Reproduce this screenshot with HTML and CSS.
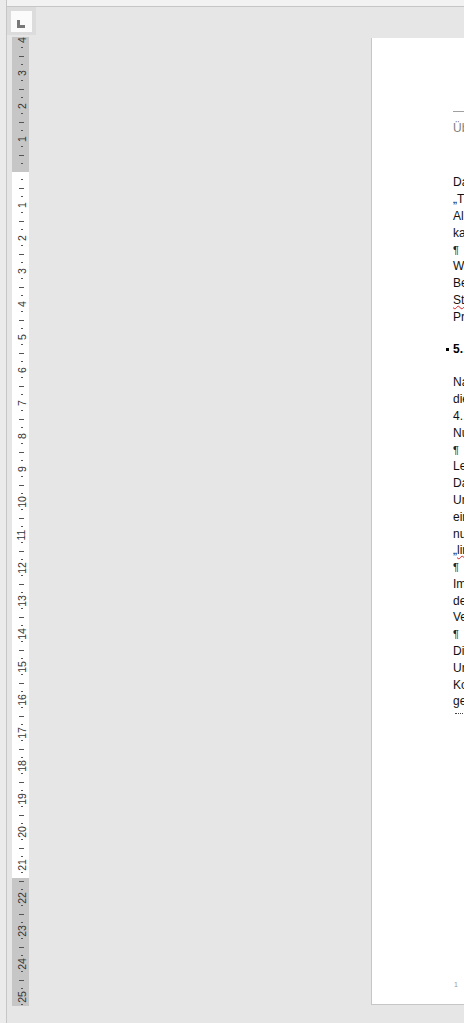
FILE: index.html
```
<!DOCTYPE html>
<html lang="de">
<head>
<meta charset="utf-8">
<title>Dokument</title>
<link rel="stylesheet" href="styles.css">
</head>
<body>
<div class="app">
  <div class="edge"></div>
  <div class="main">
    <div class="topbar"></div>
    <div class="workspace">
      <div class="side">
        <div class="corner">
          <div class="corner-in">
            <svg width="21" height="21" viewBox="0 0 21 21"><path d="M6 9h3v5h5v3H6z" fill="#787878"/></svg>
          </div>
        </div>
        <div class="ruler">
          <div class="ticks">
            <b><span>4</span></b><i class="d"></i><i class="t"></i><i class="d"></i>
            <b><span>3</span></b><i class="d"></i><i class="t"></i><i class="d"></i>
            <b><span>2</span></b><i class="d"></i><i class="t"></i><i class="d"></i>
            <b><span>1</span></b><i class="d"></i><i class="t"></i><i class="d"></i>
            <i class="e"></i><i class="d"></i><i class="t"></i><i class="d"></i>
            <b><span>1</span></b><i class="d"></i><i class="t"></i><i class="d"></i>
            <b><span>2</span></b><i class="d"></i><i class="t"></i><i class="d"></i>
            <b><span>3</span></b><i class="d"></i><i class="t"></i><i class="d"></i>
            <b><span>4</span></b><i class="d"></i><i class="t"></i><i class="d"></i>
            <b><span>5</span></b><i class="d"></i><i class="t"></i><i class="d"></i>
            <b><span>6</span></b><i class="d"></i><i class="t"></i><i class="d"></i>
            <b><span>7</span></b><i class="d"></i><i class="t"></i><i class="d"></i>
            <b><span>8</span></b><i class="d"></i><i class="t"></i><i class="d"></i>
            <b><span>9</span></b><i class="d"></i><i class="t"></i><i class="d"></i>
            <b><span>10</span></b><i class="d"></i><i class="t"></i><i class="d"></i>
            <b><span>11</span></b><i class="d"></i><i class="t"></i><i class="d"></i>
            <b><span>12</span></b><i class="d"></i><i class="t"></i><i class="d"></i>
            <b><span>13</span></b><i class="d"></i><i class="t"></i><i class="d"></i>
            <b><span>14</span></b><i class="d"></i><i class="t"></i><i class="d"></i>
            <b><span>15</span></b><i class="d"></i><i class="t"></i><i class="d"></i>
            <b><span>16</span></b><i class="d"></i><i class="t"></i><i class="d"></i>
            <b><span>17</span></b><i class="d"></i><i class="t"></i><i class="d"></i>
            <b><span>18</span></b><i class="d"></i><i class="t"></i><i class="d"></i>
            <b><span>19</span></b><i class="d"></i><i class="t"></i><i class="d"></i>
            <b><span>20</span></b><i class="d"></i><i class="t"></i><i class="d"></i>
            <b><span>21</span></b><i class="d"></i><i class="t"></i><i class="d"></i>
            <b><span>22</span></b><i class="d"></i><i class="t"></i><i class="d"></i>
            <b><span>23</span></b><i class="d"></i><i class="t"></i><i class="d"></i>
            <b><span>24</span></b><i class="d"></i><i class="t"></i><i class="d"></i>
            <b><span>25</span></b><i class="d"></i>
          </div>
        </div>
      </div>
      <div class="page">
        <div class="header">Überblick und Vorgehensweise</div>
        <div class="block first">
          <div class="ln">Das Ziel dieser Arbeit ist es, einen Überblick über</div>
          <div class="ln">„Thema und Methode“ zu geben, die in diesem</div>
          <div class="ln">Allgemeinen Abschnitt beschrieben werden. Dabei wird</div>
          <div class="ln">kann man die Ergebnisse sinnvoll nutzen.¶</div>
          <div class="ln"><span class="pm">¶</span></div>
          <div class="ln">Wie im vorherigen Kapitel beschrieben, wurden die</div>
          <div class="ln">Bereiche der Untersuchung nach dem aktuellen</div>
          <div class="ln"><span class="sq">Stakeholder</span>-Ansatz ausgewählt und im folgenden</div>
          <div class="ln">Prozess dargestellt.¶</div>
        </div>
        <div class="heading">5. Vorgehensweise¶</div>
        <div class="block">
          <div class="ln">Nachdem die Anforderungen definiert wurden, werden</div>
          <div class="ln">die einzelnen Schritte erläutert, die bereits in Kapitel</div>
          <div class="ln">4. beschrieben wurden.</div>
          <div class="ln">Nun folgt die Umsetzung.¶</div>
          <div class="ln"><span class="pm">¶</span></div>
          <div class="ln">Leider gibt es keine einheitliche Lösung.</div>
          <div class="ln">Daher wird zunächst ein Modell erstellt.</div>
          <div class="ln">Um diese Aufgabe zu lösen, wird</div>
          <div class="ln">ein Verfahren verwendet, das</div>
          <div class="ln">nur auf frei verfügbare Daten</div>
          <div class="ln">„<span class="sq">linked</span> data“ zurückgreift.¶</div>
          <div class="ln"><span class="pm">¶</span></div>
          <div class="ln">Im Anschluss werden die Ergebnisse</div>
          <div class="ln">der Analyse vorgestellt und mit</div>
          <div class="ln">Verfahren verglichen.¶</div>
          <div class="ln"><span class="pm">¶</span></div>
          <div class="ln">Die Bewertung erfolgt anhand der</div>
          <div class="ln">Unterschiede zwischen den</div>
          <div class="ln">Kosten und dem Nutzen, die sich</div>
          <div class="ln">gegenüber dem Status quo ergeben.¶</div>
        </div>
        <div class="dotted"></div>
        <div class="footer">1</div>
      </div>
    </div>
  </div>
</div>
</body>
</html>
```

FILE: styles.css
```
html, body {
  margin: 0;
  padding: 0;
}
body {
  width: 464px;
  height: 1023px;
  overflow: hidden;
  background: #e6e6e6;
  font-family: "Liberation Sans", Arial, sans-serif;
}
.app {
  display: flex;
  width: 464px;
  height: 1023px;
  overflow: hidden;
}
.edge {
  flex: none;
  width: 6px;
  background: #ebebeb;
  border-right: 1px solid #c6c6c6;
}
.main {
  flex: 1;
  min-width: 0;
  display: flex;
  flex-direction: column;
  overflow: hidden;
}
.topbar {
  flex: none;
  height: 6px;
  background: #f2f2f2;
  border-bottom: 1px solid #c6c6c6;
}
.workspace {
  flex: 1;
  display: flex;
  background: #e6e6e6;
  overflow: hidden;
}
.side {
  flex: none;
  width: 29px;
  display: flex;
  flex-direction: column;
}
.corner {
  width: 21px;
  height: 21px;
  padding: 4px 4px 3px 4px;
  background: #dcdcdc;
}
.corner-in {
  width: 21px;
  height: 21px;
  background: #fbfbfb;
}
.corner-in svg {
  display: block;
}
.ruler {
  margin-top: 2px;
  margin-left: 5px;
  width: 17px;
  height: 969px;
  overflow: hidden;
  background: linear-gradient(to bottom, #c6c6c6 0, #c6c6c6 135px, #ffffff 135px, #ffffff 841px, #c6c6c6 841px);
}
.ticks {
  margin-top: -1.6px;
  padding-left: 2px;
}
.ticks > i,
.ticks > b {
  display: flex;
  height: 8.25px;
  align-items: center;
  justify-content: center;
}
.ticks > i.d::before {
  content: "";
  width: 2px;
  height: 1px;
  background: #555555;
}
.ticks > i.t::before {
  content: "";
  width: 5px;
  height: 1px;
  background: #555555;
}
.ticks > b {
  font-weight: normal;
  font-size: 10.5px;
  color: #333333;
}
.ticks > b span {
  display: block;
  line-height: 10px;
  white-space: nowrap;
  transform: rotate(-90deg);
}
.page {
  flex: none;
  display: flex;
  flex-direction: column;
  margin-left: 335px;
  margin-top: 31px;
  width: 600px;
  height: 878px;
  padding: 73px 0 15px 81px;
  box-sizing: content-box;
  background: #ffffff;
  border-left: 1px solid #c6c6c6;
  border-bottom: 1px solid #c6c6c6;
}
.header {
  border-top: 1px solid #a0a0a0;
  padding-top: 8.4px;
  font-size: 12px;
  line-height: 16.8px;
  color: #7f7f7f;
  white-space: nowrap;
}
.block {
  font-size: 12px;
  line-height: 16.8px;
  color: #111111;
  white-space: nowrap;
}
.block.first {
  margin-top: 37.2px;
}
.pm {
  font-size: 11px;
  color: #222222;
}
.heading {
  margin-top: 15.8px;
  margin-bottom: 16.2px;
  font-size: 12px;
  line-height: 16.8px;
  font-weight: bold;
  color: #000000;
  white-space: nowrap;
}
.heading::before {
  content: "";
  display: inline-block;
  width: 3px;
  height: 3px;
  background: #000000;
  margin-left: -7px;
  margin-right: 4px;
  vertical-align: 2px;
}
.sq {
  text-decoration: underline wavy #e02020;
  text-decoration-thickness: 1px;
}
.dotted {
  margin-top: 3px;
  margin-left: 2px;
  width: 120px;
  border-top: 1px dotted #444444;
}
.footer {
  margin-top: auto;
  padding-left: 1px;
  font-size: 7px;
  line-height: 8px;
  color: #9a9a9a;
}
```
